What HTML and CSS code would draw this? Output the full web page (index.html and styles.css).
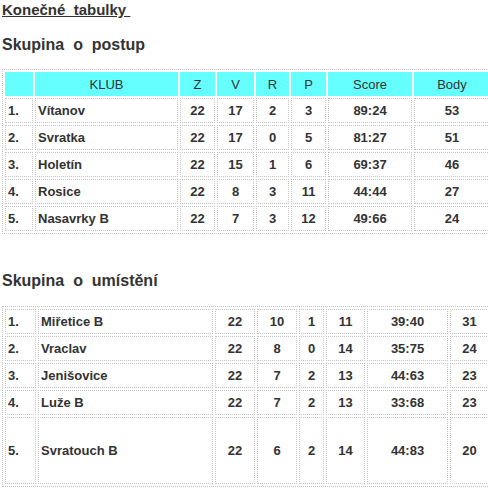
FILE: index.html
```html
<!DOCTYPE html>
<html lang="cs">
<head>
<meta charset="utf-8">
<title>Konečné tabulky</title>
<link rel="stylesheet" href="styles.css">
</head>
<body>
<div class="page">
  <h1 class="title"><span class="u">Konečné&nbsp; tabulky&nbsp;</span></h1>
  <h2 class="group g1">Skupina&nbsp; o&nbsp; postup</h2>
  <table class="tab t1">
    <tr class="head">
      <th class="c1"></th>
      <th class="c2">KLUB</th>
      <th class="c3">Z</th>
      <th class="c4">V</th>
      <th class="c5">R</th>
      <th class="c6">P</th>
      <th class="c7">Score</th>
      <th class="c8">Body</th>
    </tr>
    <tr><td class="l">1.</td><td class="l">Vítanov</td><td>22</td><td>17</td><td>2</td><td>3</td><td>89:24</td><td>53</td></tr>
    <tr><td class="l">2.</td><td class="l">Svratka</td><td>22</td><td>17</td><td>0</td><td>5</td><td>81:27</td><td>51</td></tr>
    <tr><td class="l">3.</td><td class="l">Holetín</td><td>22</td><td>15</td><td>1</td><td>6</td><td>69:37</td><td>46</td></tr>
    <tr><td class="l">4.</td><td class="l">Rosice</td><td>22</td><td>8</td><td>3</td><td>11</td><td>44:44</td><td>27</td></tr>
    <tr><td class="l">5.</td><td class="l">Nasavrky B</td><td>22</td><td>7</td><td>3</td><td>12</td><td>49:66</td><td>24</td></tr>
  </table>

  <h2 class="group g2">Skupina&nbsp; o&nbsp; umístění</h2>
  <table class="tab t2">
    <tr><td class="l d1">1.</td><td class="l d2">Miřetice B</td><td class="d3">22</td><td class="d4">10</td><td class="d5">1</td><td class="d6">11</td><td class="d7">39:40</td><td class="d8">31</td></tr>
    <tr><td class="l">2.</td><td class="l">Vraclav</td><td>22</td><td>8</td><td>0</td><td>14</td><td>35:75</td><td>24</td></tr>
    <tr><td class="l">3.</td><td class="l">Jenišovice</td><td>22</td><td>7</td><td>2</td><td>13</td><td>44:63</td><td>23</td></tr>
    <tr><td class="l">4.</td><td class="l">Luže B</td><td>22</td><td>7</td><td>2</td><td>13</td><td>33:68</td><td>23</td></tr>
    <tr class="tall"><td class="l">5.</td><td class="l">Svratouch B</td><td>22</td><td>6</td><td>2</td><td>14</td><td>44:83</td><td>20</td></tr>
  </table>
</div>
</body>
</html>
```

FILE: styles.css
```css
html, body {
  margin: 0;
  padding: 0;
  overflow: hidden;
  background: #ffffff;
}

.page {
  padding: 0 0 0 2px;
  font-family: "Liberation Sans", Arial, sans-serif;
  color: #333333;
}

.title {
  margin: 0;
  padding-top: 1px;
  font-size: 15px;
  font-weight: bold;
  line-height: 17px;
  height: 17px;
}

.u {
  text-decoration: underline;
}

.group {
  margin: 0;
  font-size: 16px;
  font-weight: bold;
  line-height: 19px;
}

.g1 {
  margin-top: 17px;
  margin-bottom: 15px;
}

.g2 {
  margin-top: 37px;
  margin-bottom: 16px;
}

.tab {
  border: 1px dotted #c4c4c4;
  border-spacing: 2px;
  table-layout: fixed;
  font-size: 13px;
}

.t1 {
  width: 491px;
}

.t2 {
  width: 490px;
}

.tab th,
.tab td {
  box-sizing: border-box;
  padding: 0 2px;
  text-align: center;
  vertical-align: middle;
  line-height: 15px;
}

.tab td {
  border: 1px dotted #c4c4c4;
  height: 25px;
  font-weight: bold;
}

.tab td.l {
  text-align: left;
}

.tab th {
  height: 24px;
  background: #66ffff;
  border: 1px solid #66ffff;
  font-weight: normal;
}

.t1 .c1 { width: 28px; }
.t1 .c2 { width: 143px; }
.t1 .c3 { width: 35px; }
.t1 .c4 { width: 37px; }
.t1 .c5 { width: 33px; }
.t1 .c6 { width: 35px; }
.t1 .c7 { width: 84px; }
.t1 .c8 { width: 76px; }

.t2 .d1 { width: 31px; }
.t2 .d2 { width: 175px; }
.t2 .d3 { width: 40px; }
.t2 .d4 { width: 40px; }
.t2 .d5 { width: 25px; }
.t2 .d6 { width: 39px; }
.t2 .d7 { width: 81px; }
.t2 .d8 { width: 39px; }

.t2 .tall td {
  height: 67px;
}
```
